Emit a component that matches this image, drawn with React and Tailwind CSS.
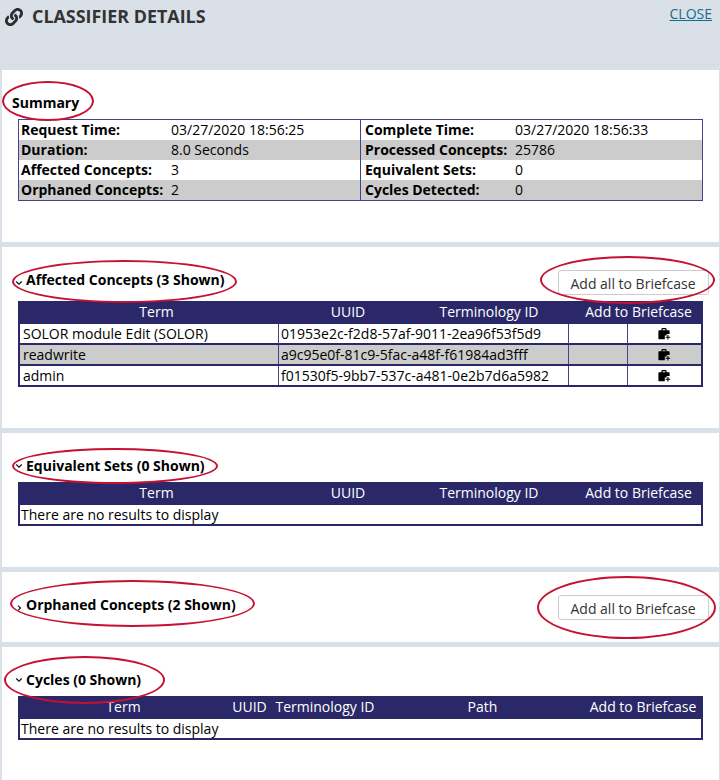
import React from 'react';

function LinkIcon() {
  return (
    <svg className="h-[18px] w-[18px] shrink-0" viewBox="0 0 512 512" fill="#2d2d2d">
      <path d="M326.612 185.391c59.747 59.809 58.927 155.698.36 214.59-.11.12-.24.25-.36.37l-67.2 67.2c-59.27 59.27-155.699 59.262-214.96 0-59.27-59.26-59.27-155.7 0-214.96l37.106-37.106c9.84-9.84 26.786-3.3 27.294 10.606.648 17.722 3.826 35.527 9.69 52.721 1.986 5.822.567 12.262-3.783 16.612l-13.087 13.087c-28.026 28.026-28.905 73.66-1.155 101.96 28.024 28.579 74.086 28.749 102.325.51l67.2-67.19c28.191-28.191 28.073-73.757 0-101.83-3.701-3.694-7.429-6.564-10.341-8.569a16.037 16.037 0 0 1-6.947-12.606c-.396-10.567 3.348-21.456 11.698-29.806l21.054-21.055c5.521-5.521 14.182-6.199 20.584-1.731a152.482 152.482 0 0 1 20.522 17.197zM467.547 44.449c-59.261-59.262-155.69-59.27-214.96 0l-67.2 67.2c-.12.12-.25.25-.36.37-58.566 58.892-59.387 154.781.36 214.59a152.454 152.454 0 0 0 20.521 17.196c6.402 4.468 15.064 3.789 20.584-1.731l21.054-21.055c8.35-8.35 12.094-19.239 11.698-29.806a16.037 16.037 0 0 0-6.947-12.606c-2.912-2.005-6.64-4.875-10.341-8.569-28.073-28.073-28.191-73.639 0-101.83l67.2-67.19c28.239-28.239 74.3-28.069 102.325.51 27.75 28.3 26.872 73.934-1.155 101.96l-13.087 13.087c-4.35 4.35-5.769 10.79-3.783 16.612 5.864 17.194 9.042 34.999 9.69 52.721.509 13.906 17.454 20.446 27.294 10.606l37.106-37.106c59.271-59.259 59.271-155.699.001-214.959z" />
    </svg>
  );
}

function BriefcaseAdd() {
  return (
    <svg className="h-[12px] w-[13px]" viewBox="0 0 13 12">
      <path d="M4 3V1.3Q4 .6 4.7 .6H7.3Q8 .6 8 1.3V3" fill="none" stroke="#000" strokeWidth="1.2" />
      <path d="M1.2 2.2H10.8Q11.6 2.2 11.6 3V6H8.7V7.6H6.8V11.2H1.2Q.4 11.2.4 10.4V3Q.4 2.2 1.2 2.2Z" fill="#000" />
      <path d="M9.9 7V11.6M7.6 9.3H12.2" stroke="#000" strokeWidth="1.1" />
    </svg>
  );
}

function Chevron({ open, className }) {
  return (
    <svg className={`h-[6px] w-[8px] shrink-0 ${className}`} viewBox="0 0 8 6" fill="none" stroke="#111" strokeWidth="1.2">
      <path d={open ? 'M1.2 1.5L4 4.2L6.8 1.5' : 'M3 .6L5.5 3L3 5.4'} />
    </svg>
  );
}

// Hand-drawn style ring that highlights a label
function Ring({ className }) {
  return <div className={`pointer-events-none absolute rounded-[50%] border-2 border-[#c41230] ${className}`} />;
}

function BriefcaseButton({ className }) {
  return (
    <button className={`w-[151px] shrink-0 whitespace-nowrap rounded-[3px] border border-[#ccc] bg-white pr-px text-center text-[14px] leading-[25px] text-[#333] ${className}`}>
      Add all to Briefcase
    </button>
  );
}

function SectionTitle({ open, chevron = '', children }) {
  return (
    <div className="flex h-5 items-center gap-[3px] pl-[13px] text-[14px] font-bold leading-5">
      <Chevron open={open} className={chevron} />
      <h2 className="whitespace-nowrap">{children}</h2>
    </div>
  );
}

const summary = [
  ['Request Time:', '03/27/2020 18:56:25', 'Complete Time:', '03/27/2020 18:56:33'],
  ['Duration:', '8.0 Seconds', 'Processed Concepts:', '25786'],
  ['Affected Concepts:', '3', 'Equivalent Sets:', '0'],
  ['Orphaned Concepts:', '2', 'Cycles Detected:', '0'],
];

const affected = [
  ['SOLOR module Edit (SOLOR)', '01953e2c-f2d8-57af-9011-2ea96f53f5d9'],
  ['readwrite', 'a9c95e0f-81c9-5fac-a48f-f61984ad3fff'],
  ['admin', 'f01530f5-9bb7-537c-a481-0e2b7d6a5982'],
];

function TableHead() {
  return (
    <div className="grid h-[22px] grid-cols-[277px_105px_177px_1fr] bg-[#2b2869] text-center leading-[21px] text-white">
      <span>Term</span>
      <span className="pl-[1px]">UUID</span>
      <span className="pl-px">Terminology ID</span>
      <span className="whitespace-nowrap pr-[3px]">Add to Briefcase</span>
    </div>
  );
}

function EmptyBody() {
  return <div className="h-[22px] border-2 border-t border-[#2b2869] bg-white pl-[1px] leading-[19px]">There are no results to display</div>;
}

export default function App() {
  return (
    <div className="relative flex h-[780px] w-[720px] flex-col gap-[5px] overflow-hidden bg-[#d9e0e8] pl-[2px] pr-px font-['Open_Sans','Noto_Sans',sans-serif] text-[14px] text-black">
      <header className="-ml-[2px] -mr-px mb-0 flex h-[65px] shrink-0 items-start justify-between border-b border-[#d9dcde] pl-[5px] pr-[8px]">
        <div className="flex items-center gap-[9px] pt-[4px]">
          <LinkIcon />
          <h1 className="text-[17.9px] font-bold leading-[25px] text-[#333]">CLASSIFIER DETAILS</h1>
        </div>
        <a className="pt-[4px] text-[14px] leading-5 text-[#126b91] underline" href="#close">CLOSE</a>
      </header>

      <section className="h-[172px] shrink-0 bg-white pt-[23px]">
        <h2 className="pl-[10px] text-[14px] font-bold leading-5">Summary</h2>
        <div className="ml-4 mt-[6px] w-[685px] border border-[#45418a]">
          {summary.map((r, i) => (
            <div key={r[0]} className={`grid h-5 grid-cols-[150px_192px_150px_1fr] whitespace-nowrap leading-5 ${i % 2 ? 'bg-[#ccc]' : 'bg-white'}`}>
              <span className="pl-[2px] font-bold">{r[0]}</span>
              <span className="border-r border-[#45418a] pl-[2px]">{r[1]}</span>
              <span className="pl-[4px] font-bold">{r[2]}</span>
              <span className="pl-[4px]">{r[3]}</span>
            </div>
          ))}
        </div>
      </section>

      <section className="h-[181px] shrink-0 bg-white pt-[23px]">
        <div className="flex h-[31px] items-start justify-between pr-[10px]">
          <SectionTitle open chevron="mt-[5px]">Affected Concepts (3 Shown)</SectionTitle>
          <BriefcaseButton className="h-[25px]" />
        </div>
        <div className="ml-4 w-[685px]">
          <TableHead />
          <div className="border-b-2 border-[#2b2869]">
            {affected.map((r, i) => (
              <div key={r[0]} className={`grid grid-cols-[259px_290px_59px_1fr] border-x-2 border-[#2b2869] whitespace-nowrap ${i ? 'h-[21px] border-t-2 leading-[19px]' : 'h-[20px] border-t leading-5'} ${i % 2 ? 'bg-[#ccc]' : 'bg-white'}`}>
                <span className="border-r border-[#45418a] pl-[3px]">{r[0]}</span>
                <span className="border-r border-[#45418a] pl-[2px]">{r[1]}</span>
                <span className="border-r border-[#45418a]" />
                <span className="flex items-center justify-center pr-px"><BriefcaseAdd /></span>
              </div>
            ))}
          </div>
        </div>
      </section>

      <section className="h-[134px] shrink-0 bg-white pt-[23px]">
        <SectionTitle open>Equivalent Sets (0 Shown)</SectionTitle>
        <div className="ml-4 mt-[6px] w-[685px]">
          <TableHead />
          <EmptyBody />
        </div>
      </section>

      <section className="flex h-[70px] shrink-0 items-start justify-between bg-white pr-[10px] pt-[23px]">
        <SectionTitle chevron="mt-[5px]">Orphaned Concepts (2 Shown)</SectionTitle>
        <BriefcaseButton className="h-[25px]" />
      </section>

      <section className="h-[133px] shrink-0 bg-white pt-[23px]">
        <SectionTitle open>Cycles (0 Shown)</SectionTitle>
        <div className="ml-4 mt-[6px] w-[685px]">
          <div className="grid h-[22px] grid-cols-[211px_41px_109px_205px_1fr] whitespace-nowrap bg-[#2b2869] text-center leading-[21px] text-white">
            <span>Term</span>
            <span>UUID</span>
            <span className="pl-px">Terminology ID</span>
            <span className="pl-[2px]">Path</span>
            <span className="pr-px">Add to Briefcase</span>
          </div>
          <EmptyBody />
        </div>
      </section>

      <Ring className="left-[2px] top-[81px] h-[40px] w-[92px]" />
      <Ring className="left-[12px] top-[260px] h-[43px] w-[225px]" />
      <Ring className="left-[540px] top-[256px] h-[48px] w-[175px]" />
      <Ring className="left-[12px] top-[448px] h-[36px] w-[206px]" />
      <Ring className="left-[10px] top-[580px] h-[47px] w-[245px]" />
      <Ring className="left-[537px] top-[576px] h-[63px] w-[179px]" />
      <Ring className="left-[4px] top-[656px] h-[48px] w-[161px]" />
    </div>
  );
}
